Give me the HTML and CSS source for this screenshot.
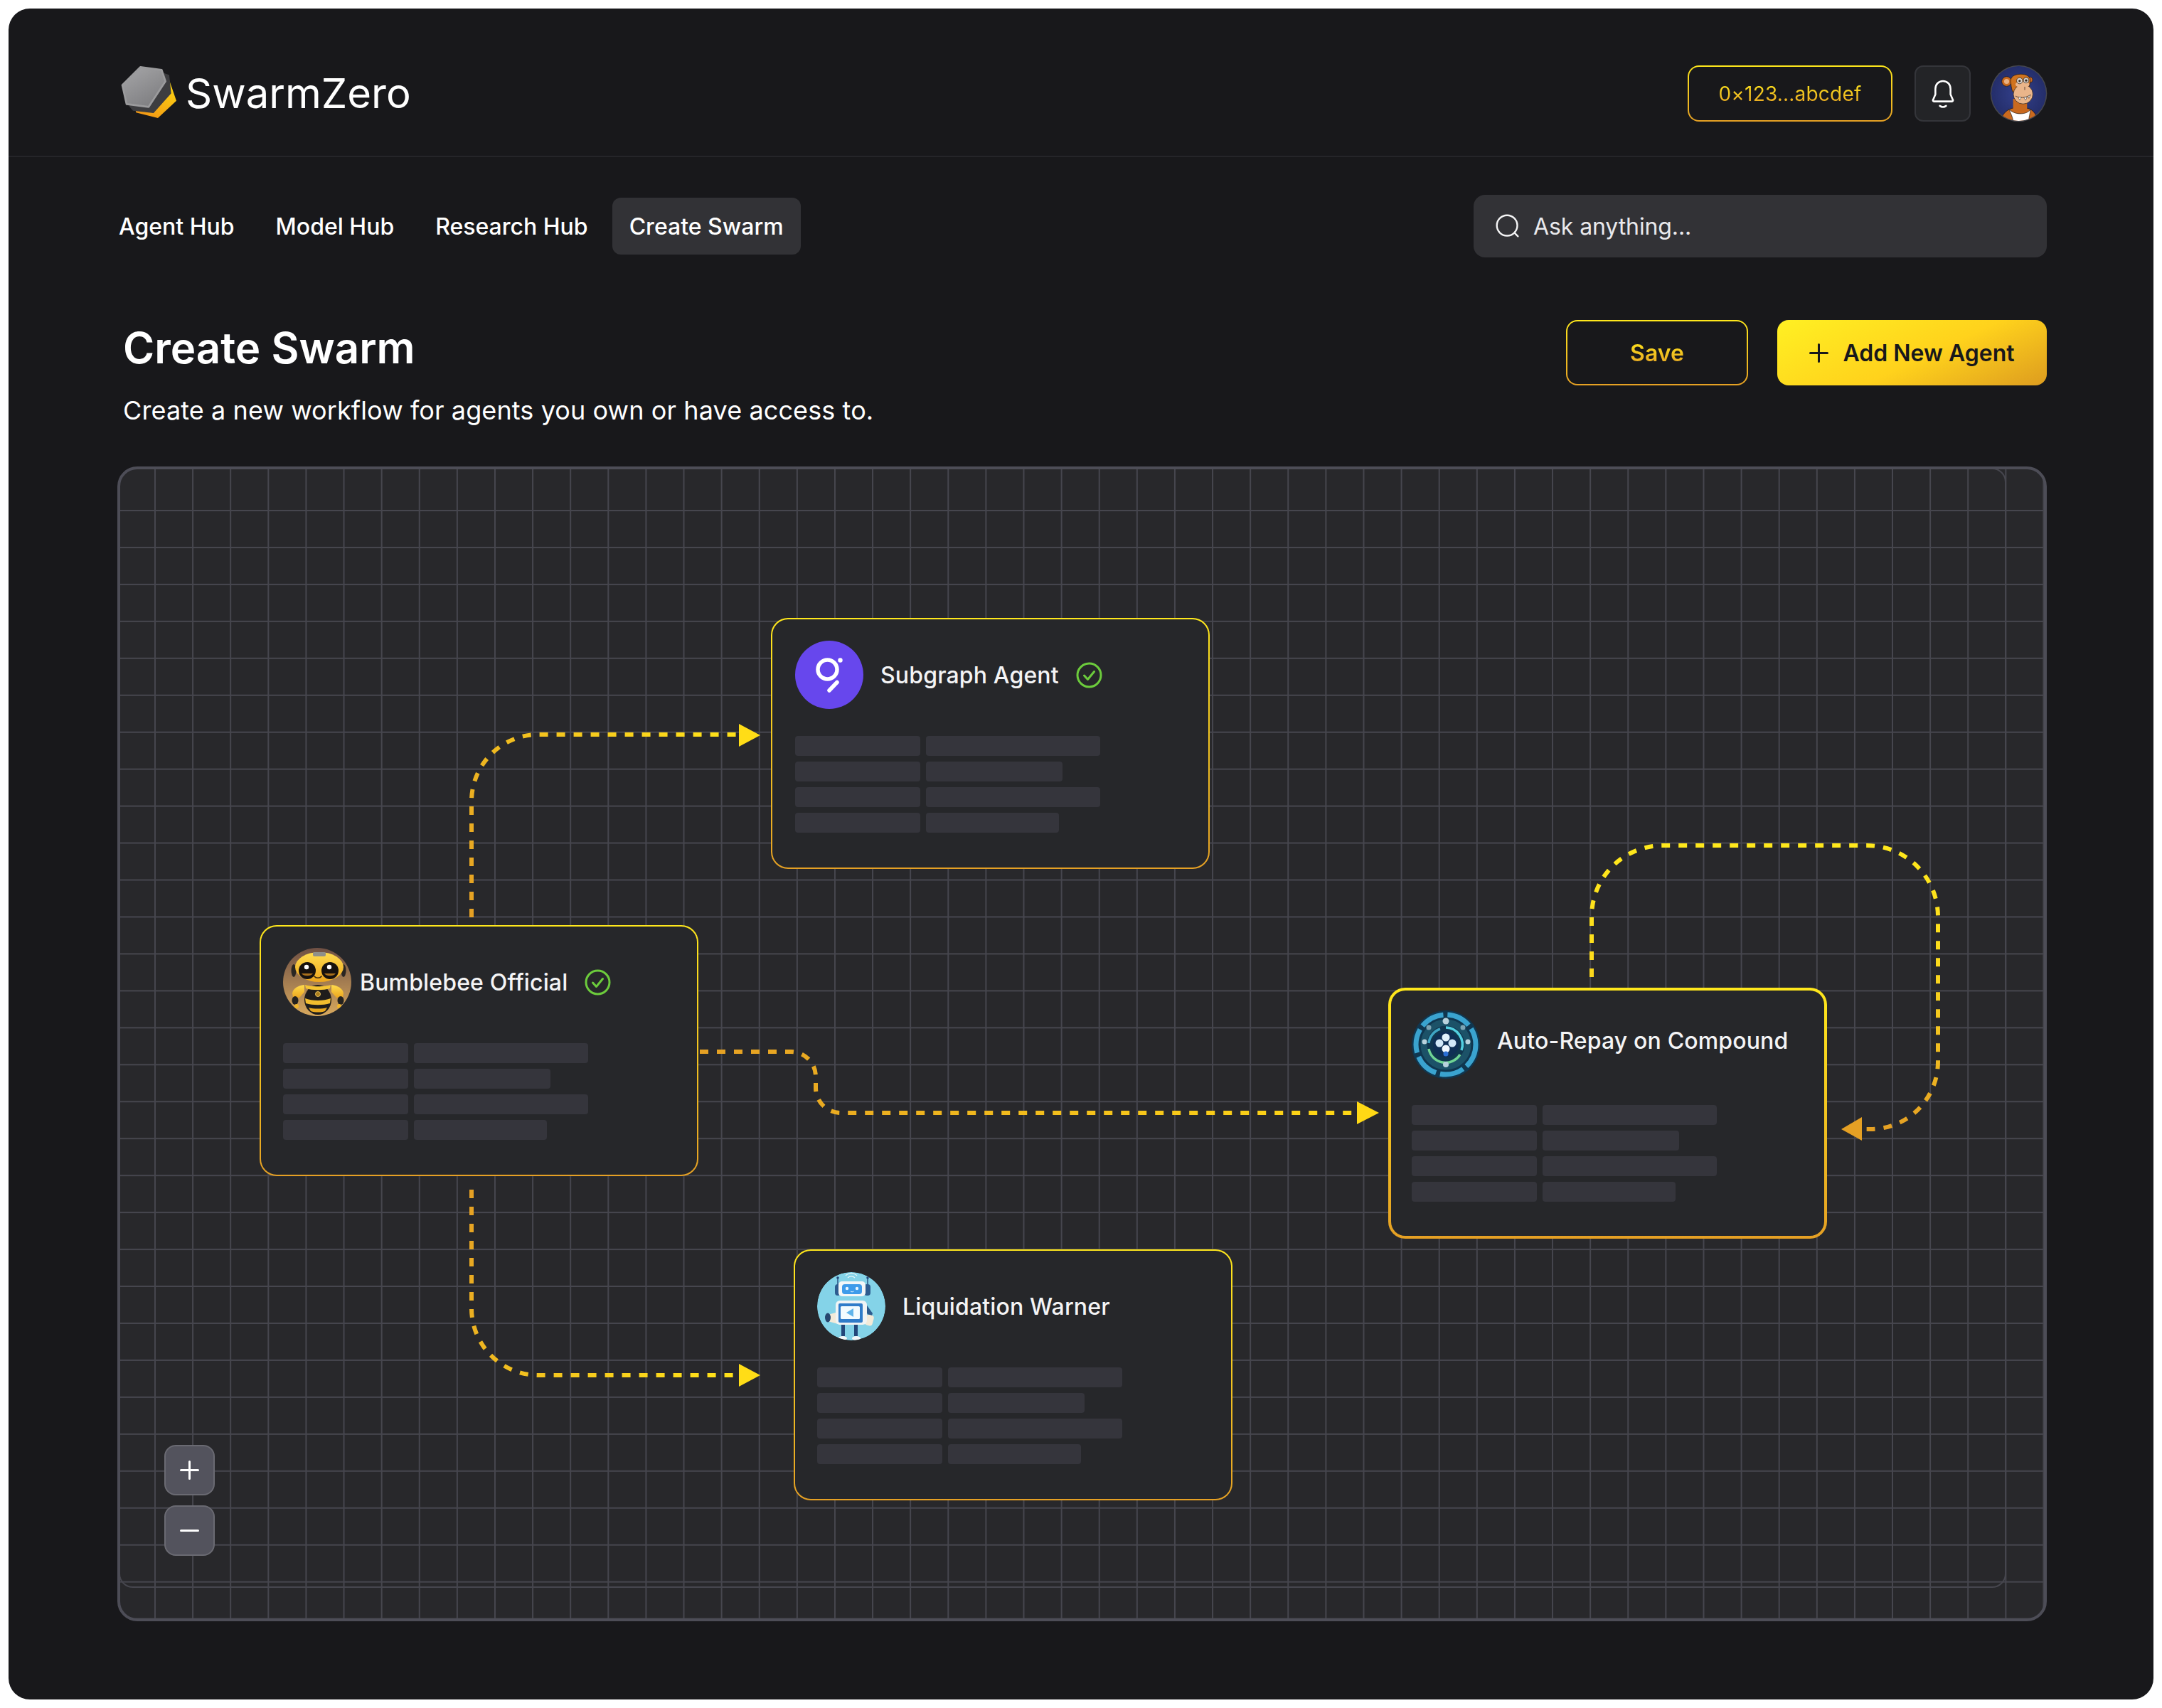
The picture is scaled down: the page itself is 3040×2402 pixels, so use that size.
FILE: index.html
```html
<!DOCTYPE html>
<html lang="en">
<head>
    <meta charset="UTF-8">
    <meta name="viewport" content="width=device-width, initial-scale=1.0">
    <title>SwarmZero - Create Swarm</title>
    <link rel="stylesheet" href="styles.css">
</head>
<body>
    <div class="panel">
        <header class="top-bar">
            <div class="logo">
                <svg class="logo-mark" viewBox="50 70 250 240">
                    <defs>
                        <linearGradient id="logoGold" x1="0.9" y1="0.1" x2="0.4" y2="1">
                            <stop offset="0" stop-color="#ffdf12"/>
                            <stop offset="1" stop-color="#f39a14"/>
                        </linearGradient>
                        <linearGradient id="logoGrey" x1="0.2" y1="0" x2="0.8" y2="1">
                            <stop offset="0" stop-color="#a3a3a5"/>
                            <stop offset="1" stop-color="#7c7c7f"/>
                        </linearGradient>
                    </defs>
                    <polygon points="200,100 262,135 292,222 214,295 122,272 110,220" fill="url(#logoGold)" stroke-linejoin="round"/>
                    <polygon points="240,108 260,115 268,190 195,272 110,262 95,245" fill="#3d3d40" stroke="#3d3d40" stroke-width="4" stroke-linejoin="round"/>
                    <polygon points="140,80 230,92 246,140 175,248 82,236 64,156" fill="url(#logoGrey)" stroke="#9b9b9d" stroke-width="8" stroke-linejoin="round"/>
                </svg>
                <span class="logo-text">SwarmZero</span>
            </div>
            <div class="top-actions">
                <button class="wallet-btn"><span class="gold-text">0×123...abcdef</span></button>
                <button class="bell-btn">
                    <svg class="bell-icon" viewBox="0 0 24 24" fill="none" stroke="#fff" stroke-width="1.4" stroke-linecap="round" stroke-linejoin="round">
                        <path d="M12 2.2c-3.4 0-5.800 2.600-5.800 6v4.200L4.400 16.600c-.3.600.1 1.200.7 1.200h13.800c.6 0 1-.6.7-1.200l-1.800-4.200V8.200c0-3.400-2.400-6-5.800-6z"/>
                        <path d="M9.600 21.200c1.400 1 3.400 1 4.800 0"/>
                    </svg>
                </button>
                <svg class="user-avatar" viewBox="50 33 248 248">
                    <defs>
                        <radialGradient id="apeBg" cx="0.5" cy="0.5" r="0.6">
                            <stop offset="0" stop-color="#33408c"/>
                            <stop offset="1" stop-color="#212a63"/>
                        </radialGradient>
                        <clipPath id="apeClip"><circle cx="174" cy="157" r="118"/></clipPath>
                    </defs>
                    <circle cx="174" cy="157" r="122" fill="#45464d"/>
                    <g clip-path="url(#apeClip)">
                        <circle cx="174" cy="157" r="118" fill="url(#apeBg)"/>
                        <path d="M95 285c4-40 30-62 60-66l58 2c26 6 40 30 44 64z" fill="#c9691f" stroke="#1c1410" stroke-width="2"/>
                        <path d="M132 224c10 24 16 34 20 60h64c2-26 6-40 10-58-12 12-24 18-46 18-20 0-36-8-48-20z" fill="#fff" stroke="#1c1410" stroke-width="2"/>
                        <rect x="150" y="180" width="60" height="50" fill="#c9691f"/>
                        <circle cx="122" cy="105" r="21" fill="#c9691f" stroke="#1c1410" stroke-width="2"/>
                        <circle cx="122" cy="105" r="11" fill="#e8b083"/>
                        <circle cx="222" cy="98" r="12" fill="#c9691f" stroke="#1c1410" stroke-width="2"/>
                        <path d="M140 100c0-20 26-28 50-26 24 1 36 14 34 32-2 14-6 20-6 30l-70 14c-6-16-8-34-8-50z" fill="#d0731f" stroke="#1c1410" stroke-width="2"/>
                        <ellipse cx="193" cy="160" rx="42" ry="42" fill="#eab58a" stroke="#1c1410" stroke-width="2"/>
                        <ellipse cx="190" cy="118" rx="30" ry="14" fill="#eab58a"/>
                        <circle cx="178" cy="102" r="13" fill="#d9d2cb" stroke="#1c1410" stroke-width="2"/>
                        <circle cx="206" cy="100" r="12" fill="#d9d2cb" stroke="#1c1410" stroke-width="2"/>
                        <circle cx="178" cy="103" r="5" fill="#3a2c22"/>
                        <circle cx="206" cy="101" r="5" fill="#3a2c22"/>
                        <path d="M200 128v14M160 168c18 10 48 8 66-6" fill="none" stroke="#1c1410" stroke-width="2"/>
                        <path d="M172 172l6 14 8-12zM196 174l8 12 6-14zM214 168l4 10 6-14z" fill="#fff" stroke="#1c1410" stroke-width="1.5"/>
                    </g>
                </svg>
            </div>
        </header>

        <main class="content">
            <div class="nav-row">
                <nav class="nav-links">
                    <a class="nav-link">Agent Hub</a>
                    <a class="nav-link">Model Hub</a>
                    <a class="nav-link">Research Hub</a>
                    <a class="nav-link active">Create Swarm</a>
                </nav>
                <div class="search-box">
                    <svg class="search-icon" viewBox="0 0 24 24" fill="none" stroke="#f4f4f5" stroke-width="1.6" stroke-linecap="round">
                        <circle cx="11.4" cy="11.4" r="9.6"/>
                        <path d="M18.6 18.6l3 3"/>
                    </svg>
                    <span>Ask anything...</span>
                </div>
            </div>

            <div class="title-row">
                <div class="title-block">
                    <h1>Create Swarm</h1>
                    <p>Create a new workflow for agents you own or have access to.</p>
                </div>
                <div class="title-actions">
                    <button class="save-btn"><span class="gold-text">Save</span></button>
                    <button class="add-btn">
                        <svg class="plus-icon" viewBox="0 0 27 27" stroke="#18181b" stroke-width="3" stroke-linecap="round">
                            <path d="M13.5 1.5v24M1.5 13.5h24"/>
                        </svg>
                        Add New Agent
                    </button>
                </div>
            </div>

            <section class="canvas">
                <div class="grid-lines"></div>
                <div class="inner-frame"></div>

                <!-- connectors use page coordinates through the viewBox -->
                <svg class="connectors" viewBox="169 660 2705 1616" fill="none">
                    <defs>
                        <linearGradient id="lineUp" gradientUnits="userSpaceOnUse" x1="663" y1="1290" x2="1000" y2="1033">
                            <stop offset="0" stop-color="#e5a024"/>
                            <stop offset="1" stop-color="#ffe01a"/>
                        </linearGradient>
                        <linearGradient id="lineAcross" gradientUnits="userSpaceOnUse" x1="984" y1="1479" x2="1930" y2="1565">
                            <stop offset="0" stop-color="#e5a024"/>
                            <stop offset="1" stop-color="#ffd915"/>
                        </linearGradient>
                        <linearGradient id="lineDown" gradientUnits="userSpaceOnUse" x1="663" y1="1673" x2="1000" y2="1934">
                            <stop offset="0" stop-color="#e5a024"/>
                            <stop offset="1" stop-color="#ffe01a"/>
                        </linearGradient>
                        <linearGradient id="lineLoop" gradientUnits="userSpaceOnUse" x1="2400" y1="1189" x2="2400" y2="1590">
                            <stop offset="0" stop-color="#ffe81c"/>
                            <stop offset="0.4" stop-color="#fddc1c"/>
                            <stop offset="1" stop-color="#e5a024"/>
                        </linearGradient>
                    </defs>
                    <g stroke-width="6" stroke-dasharray="12 12">
                        <path d="M663 1290V1127a94 94 0 0 1 94-94H1044" stroke="url(#lineUp)"/>
                        <path d="M984 1479H1112a35 35 0 0 1 35 35V1530a35 35 0 0 0 35 35H1912" stroke="url(#lineAcross)"/>
                        <path d="M663 1673V1840a94 94 0 0 0 94 94H1044" stroke="url(#lineDown)"/>
                        <path d="M2238 1374V1289a100 100 0 0 1 100-100H2625a100 100 0 0 1 100 100V1493a95 95 0 0 1-95 95H2612" stroke="url(#lineLoop)"/>
                    </g>
                    <polygon points="1039,1018 1069,1034 1039,1050" fill="#ffdd17"/>
                    <polygon points="1908,1549 1939,1565 1908,1581" fill="#ffd915"/>
                    <polygon points="1039,1918 1069,1934 1039,1950" fill="#ffdd17"/>
                    <polygon points="2589,1588 2618,1571 2618,1604" fill="#e5a024"/>
                </svg>

                <div class="node node-subgraph">
                    <div class="node-head">
                        <svg class="node-avatar" viewBox="0 0 96 96">
                            <circle cx="48" cy="48" r="48" fill="#6747ed"/>
                            <circle cx="45.5" cy="40.5" r="13.5" fill="none" stroke="#fff" stroke-width="5.5"/>
                            <circle cx="63.5" cy="27.5" r="3.2" fill="#fff"/>
                            <path d="M59 58.5L48 70" stroke="#fff" stroke-width="5.5" stroke-linecap="round"/>
                        </svg>
                        <span class="node-name">Subgraph Agent</span>
                        <svg class="check-icon" viewBox="0 0 37 37" fill="none" stroke="#6ccb3c" stroke-width="3" stroke-linecap="round" stroke-linejoin="round">
                            <circle cx="18.5" cy="18.5" r="16.5"/>
                            <path d="M11.5 19l5 5.5 9-11"/>
                        </svg>
                    </div>
                    <div class="bars">
                        <div class="bar-row"><i class="bar"></i><i class="bar long"></i></div>
                        <div class="bar-row"><i class="bar"></i><i class="bar mid"></i></div>
                        <div class="bar-row"><i class="bar"></i><i class="bar long"></i></div>
                        <div class="bar-row"><i class="bar"></i><i class="bar short"></i></div>
                    </div>
                </div>

                <div class="node node-bee">
                    <div class="node-head">
                        <svg class="node-avatar" viewBox="0 0 96 96">
                            <defs>
                                <linearGradient id="beeBg" x1="0" y1="0" x2="0" y2="1">
                                    <stop offset="0" stop-color="#6f5044"/>
                                    <stop offset="1" stop-color="#d8a95e"/>
                                </linearGradient>
                                <linearGradient id="beeYellow" x1="0" y1="0" x2="0" y2="1">
                                    <stop offset="0" stop-color="#ffdc4e"/>
                                    <stop offset="1" stop-color="#eda61e"/>
                                </linearGradient>
                                <clipPath id="beeClip"><circle cx="48" cy="48" r="48"/></clipPath>
                            </defs>
                            <g clip-path="url(#beeClip)">
                                <rect width="96" height="96" fill="url(#beeBg)"/>
                                <ellipse cx="15" cy="32" rx="3.5" ry="9" fill="#2a2622"/>
                                <ellipse cx="85" cy="32" rx="3.5" ry="9" fill="#2a2622"/>
                                <path d="M30 52c-9 1-16 5-17 12l1 5 9 1 7-8z" fill="url(#beeYellow)"/>
                                <path d="M68 52c9 1 16 5 17 12l-1 5-9 1-7-8z" fill="url(#beeYellow)"/>
                                <ellipse cx="17" cy="74" rx="4.500" ry="6" fill="#24221f"/>
                                <ellipse cx="81" cy="74" rx="4.500" ry="6" fill="#24221f"/>
                                <circle cx="19" cy="82" r="3" fill="#f0b52a"/>
                                <circle cx="79" cy="82" r="3" fill="#f0b52a"/>
                                <ellipse cx="49" cy="73" rx="19" ry="21" fill="#1f1d1b"/>
                                <path d="M31 71c10 4 26 4 36 0l-1 7c-10 3-24 3-34 0z" fill="#f2bd2e"/>
                                <path d="M36 84c7 2 19 2 26 0l-3 5c-6 2-14 2-20 0z" fill="#e8a820"/>
                                <path d="M31 52c8 3 28 3 36 0l-1 5c-9 3-25 3-34 0z" fill="#f5c534"/>
                                <circle cx="49" cy="65" r="3.500" fill="#a97d1c" stroke="#e7c15b" stroke-width="1"/>
                                <ellipse cx="51" cy="27" rx="34" ry="21" fill="url(#beeYellow)"/>
                                <rect x="42" y="6" width="18" height="6" rx="2" fill="#8f8f8a"/>
                                <circle cx="34" cy="32" r="12" fill="#17120e"/>
                                <circle cx="66" cy="32" r="12" fill="#17120e"/>
                                <path d="M26 36a9 6 0 0 0 16 0z" fill="#a9701c"/>
                                <path d="M58 36a9 6 0 0 0 16 0z" fill="#a9701c"/>
                                <circle cx="33" cy="27" r="3.2" fill="#fff"/>
                                <circle cx="65" cy="27" r="3.2" fill="#fff"/>
                                <path d="M44 40c2 3 8 3 10 0" fill="none" stroke="#3a2a10" stroke-width="1.6" stroke-linecap="round"/>
                            </g>
                        </svg>
                        <span class="node-name">Bumblebee Official</span>
                        <svg class="check-icon" viewBox="0 0 37 37" fill="none" stroke="#6ccb3c" stroke-width="3" stroke-linecap="round" stroke-linejoin="round">
                            <circle cx="18.5" cy="18.5" r="16.5"/>
                            <path d="M11.5 19l5 5.5 9-11"/>
                        </svg>
                    </div>
                    <div class="bars">
                        <div class="bar-row"><i class="bar"></i><i class="bar long"></i></div>
                        <div class="bar-row"><i class="bar"></i><i class="bar mid"></i></div>
                        <div class="bar-row"><i class="bar"></i><i class="bar long"></i></div>
                        <div class="bar-row"><i class="bar"></i><i class="bar short"></i></div>
                    </div>
                </div>

                <div class="node node-repay">
                    <div class="node-head">
                        <svg class="node-avatar" viewBox="0 0 96 96" fill="none">
                            <circle cx="48" cy="48" r="48" fill="#10364f"/>
                            <circle cx="48" cy="48" r="42" stroke="#3aa3cf" stroke-width="7" stroke-dasharray="34 6"/>
                            <circle cx="48" cy="48" r="31" stroke="#1c5268" stroke-width="9"/>
                            <path d="M48 24a24 24 0 0 1 22 32" stroke="#52cfe0" stroke-width="3.5"/>
                            <path d="M68 62a24 24 0 0 1-44-8" stroke="#6fd494" stroke-width="3.5"/>
                            <path d="M24 46a24 24 0 0 1 16-20" stroke="#3fa6c4" stroke-width="3.5"/>
                            <circle cx="48" cy="48" r="18" fill="#0f2f55"/>
                            <circle cx="48" cy="38" r="5.5" fill="#e2f2fb"/>
                            <circle cx="39" cy="46" r="5.5" fill="#d2e8f8"/>
                            <circle cx="57" cy="46" r="5.5" fill="#d2e8f8"/>
                            <circle cx="48" cy="54" r="5.5" fill="#f0f8ff"/>
                            <circle cx="48" cy="61" r="3.5" fill="#2a6fd6"/>
                            <circle cx="48" cy="15" r="4.5" fill="#b8d2dc"/>
                            <circle cx="48" cy="76" r="4" fill="#b8d2dc"/>
                            <circle cx="18" cy="44" r="3.5" fill="#b8d2dc"/>
                            <circle cx="79" cy="44" r="3.5" fill="#b8d2dc"/>
                            <circle cx="24" cy="24" r="3.5" fill="#7da4b4"/>
                            <circle cx="72" cy="24" r="3.5" fill="#7da4b4"/>
                        </svg>
                        <span class="node-name">Auto-Repay on Compound</span>
                    </div>
                    <div class="bars">
                        <div class="bar-row"><i class="bar"></i><i class="bar long"></i></div>
                        <div class="bar-row"><i class="bar"></i><i class="bar mid"></i></div>
                        <div class="bar-row"><i class="bar"></i><i class="bar long"></i></div>
                        <div class="bar-row"><i class="bar"></i><i class="bar short"></i></div>
                    </div>
                </div>

                <div class="node node-warner">
                    <div class="node-head">
                        <svg class="node-avatar" viewBox="0 0 96 96">
                            <defs>
                                <clipPath id="robotClip"><circle cx="48" cy="48" r="48"/></clipPath>
                            </defs>
                            <g clip-path="url(#robotClip)">
                                <circle cx="48" cy="48" r="48" fill="#84d3e8"/>
                                <path d="M40 5a11 11 0 0 1 16 0M43 8a7 7 0 0 1 10 0" fill="none" stroke="#e2f6fa" stroke-width="1.3"/>
                                <path d="M29 8v12M71 8v12" stroke="#23477a" stroke-width="1.4"/>
                                <circle cx="29" cy="8" r="1.8" fill="#23477a"/>
                                <circle cx="71" cy="8" r="1.8" fill="#23477a"/>
                                <rect x="25" y="17" width="8" height="16" rx="4" fill="#2d5c8f"/>
                                <rect x="66" y="17" width="9" height="16" rx="4" fill="#2d5c8f"/>
                                <rect x="30" y="13" width="38" height="21" rx="5" fill="#f3f7f8"/>
                                <rect x="35" y="17" width="28" height="14" rx="4" fill="#3e9bea"/>
                                <circle cx="42" cy="23" r="2.2" fill="#eaf7ff"/>
                                <circle cx="56" cy="23" r="2.2" fill="#eaf7ff"/>
                                <path d="M47 27c1.500 1 3 1 4.500 0" fill="none" stroke="#eaf7ff" stroke-width="1"/>
                                <path d="M33 55l-18 5v9l18 5z" fill="#f3ead8"/>
                                <ellipse cx="15" cy="64" rx="4" ry="6.500" fill="#27466f"/>
                                <path d="M68 44l10 14-2 6-10-10z" fill="#2d5c8f"/>
                                <rect x="68" y="60" width="11" height="15" rx="4" fill="#f3ead8" transform="rotate(15 73 67)"/>
                                <rect x="34" y="72" width="5" height="18" fill="#23477a"/>
                                <rect x="52" y="72" width="5" height="18" fill="#23477a"/>
                                <ellipse cx="36" cy="93" rx="6" ry="3" fill="#f3f7f8"/>
                                <ellipse cx="55" cy="93" rx="6" ry="3" fill="#f3f7f8"/>
                                <rect x="26" y="40" width="44" height="34" rx="6" fill="#f0f4f5"/>
                                <rect x="30" y="44" width="34" height="27" rx="2" fill="#2f7cc9"/>
                                <rect x="33" y="48" width="27" height="18" rx="1.500" fill="#f2fbfe"/>
                                <path d="M41 57l10-6v12z" fill="#5fb4ea"/>
                            </g>
                        </svg>
                        <span class="node-name">Liquidation Warner</span>
                    </div>
                    <div class="bars">
                        <div class="bar-row"><i class="bar"></i><i class="bar long"></i></div>
                        <div class="bar-row"><i class="bar"></i><i class="bar mid"></i></div>
                        <div class="bar-row"><i class="bar"></i><i class="bar long"></i></div>
                        <div class="bar-row"><i class="bar"></i><i class="bar short"></i></div>
                    </div>
                </div>

                <div class="zoom-controls">
                    <button class="zoom-btn">
                        <svg viewBox="0 0 27 27" stroke="#fff" stroke-width="3" stroke-linecap="round"><path d="M13.5 1.5v24M1.5 13.5h24"/></svg>
                    </button>
                    <button class="zoom-btn">
                        <svg viewBox="0 0 27 27" stroke="#fff" stroke-width="3" stroke-linecap="round"><path d="M1.5 13.5h24"/></svg>
                    </button>
                </div>
            </section>
        </main>
    </div>
</body>
</html>
```

FILE: styles.css
```css
* {
    margin: 0;
    padding: 0;
    box-sizing: border-box;
}

body {
    background-color: #fff;
    font-family: "Inter", "Liberation Sans", sans-serif;
    color: #fff;
}

button {
    font-family: inherit;
    cursor: pointer;
}

.panel {
    width: 3016px;
    height: 2378px;
    margin: 12px;
    background-color: #18181b;
    border-radius: 30px;
    overflow: hidden;
}

/* Top bar */
.top-bar {
    height: 209px;
    padding: 79px 149px 0 155px;
    display: flex;
    justify-content: space-between;
    align-items: flex-start;
    border-bottom: 2px solid #252529;
}

.logo {
    display: flex;
    align-items: center;
    gap: 10px;
}

.logo-mark {
    width: 84px;
    height: 80px;
}

.logo-text {
    font-size: 58px;
    font-weight: 400;
}

.top-actions {
    display: flex;
    align-items: center;
    gap: 27px;
}

.gold-text {
    background: linear-gradient(180deg, #ffe81c, #e5a024);
    -webkit-background-clip: text;
    background-clip: text;
    color: transparent;
}

.wallet-btn {
    width: 288px;
    height: 79px;
    margin-right: 4px;
    border: 2px solid transparent;
    border-radius: 16px;
    background: linear-gradient(#18181b, #18181b) padding-box, linear-gradient(180deg, #ffe81c, #e5a024) border-box;
    font-size: 28px;
    font-weight: 400;
    letter-spacing: 0.2px;
}

.bell-btn {
    width: 79px;
    height: 79px;
    border: 2px solid #34353a;
    border-radius: 12px;
    background-color: #232427;
    display: flex;
    align-items: center;
    justify-content: center;
}

.bell-icon {
    width: 44px;
    height: 44px;
}

.user-avatar {
    width: 81px;
    height: 81px;
}

/* Nav and search */
.content {
    padding: 53px 150px 0 153px;
}

.nav-row {
    display: flex;
    justify-content: space-between;
    align-items: center;
    height: 88px;
}

.nav-links {
    display: flex;
    gap: 10px;
    margin-left: -22px;
}

.nav-link {
    height: 80px;
    padding: 0 24px;
    display: flex;
    align-items: center;
    border-radius: 12px;
    font-size: 32px;
    font-weight: 500;
}

.nav-link.active {
    background-color: #323236;
}

.search-box {
    width: 806px;
    height: 88px;
    padding-left: 30px;
    display: flex;
    align-items: center;
    gap: 18px;
    background-color: #323236;
    border-radius: 16px;
    font-size: 32px;
    letter-spacing: -0.1px;
    color: #e9e9ec;
}

.search-icon {
    width: 36px;
    height: 36px;
}

/* Title row */
.title-row {
    display: flex;
    justify-content: space-between;
    align-items: flex-start;
    padding-top: 88px;
    height: 294px;
}

.title-block {
    padding-left: 8px;
    padding-top: 4px;
}

.title-block h1 {
    font-size: 60px;
    font-weight: 600;
    line-height: 70px;
}

.title-block p {
    margin-top: 31px;
    font-size: 36px;
    font-weight: 400;
    line-height: 44px;
    letter-spacing: 0.1px;
}

.title-actions {
    display: flex;
    gap: 41px;
}

.save-btn {
    width: 256px;
    height: 92px;
    border: 2px solid transparent;
    border-radius: 16px;
    background: linear-gradient(#18181b, #18181b) padding-box, linear-gradient(180deg, #ffe81c, #e5a024) border-box;
    font-size: 32px;
    font-weight: 600;
}

.add-btn {
    width: 379px;
    height: 92px;
    display: flex;
    align-items: center;
    justify-content: center;
    gap: 20px;
    border: none;
    border-radius: 16px;
    background: linear-gradient(155deg, #fff023 0%, #ffd21c 55%, #dd9c1f 100%);
    color: #18181b;
    font-size: 32px;
    font-weight: 600;
}

.plus-icon {
    width: 27px;
    height: 27px;
}

/* Canvas */
.canvas {
    position: relative;
    width: 2713px;
    height: 1624px;
    border: 4px solid #4d4d57;
    border-radius: 28px;
    background-color: #28282b;
    background-image: linear-gradient(90deg, #46464e 2px, transparent 2px);
    background-size: 53.12px 100%;
    background-position: 48px 0;
    overflow: hidden;
}

.grid-lines {
    position: absolute;
    inset: 57px 0 0 0;
    background-image: linear-gradient(180deg, #46464e 2px, transparent 2px);
    background-size: 100% 51.96px;
}

.inner-frame {
    position: absolute;
    left: -2px;
    top: -2px;
    width: 2654px;
    height: 1575px;
    border: 2px solid #46464e;
    border-radius: 20px;
}

.connectors {
    position: absolute;
    inset: 0;
    width: 2705px;
    height: 1616px;
}

/* Nodes */
.node {
    position: absolute;
    width: 617px;
    height: 353px;
    padding: 30px 30px 30px 31px;
    border: 2px solid transparent;
    border-radius: 24px;
    background: linear-gradient(#26272a, #26272a) padding-box, linear-gradient(180deg, #ffe81c, #e5a024) border-box;
}

.node-subgraph {
    left: 915px;
    top: 209px;
    padding-left: 32px;
}

.node-bee {
    left: 196px;
    top: 641px;
}

.node-repay {
    left: 1783px;
    top: 729px;
    padding: 28px 28px 28px 29px;
    border-width: 4px;
}

.node-repay .node-name {
    margin-bottom: 12px;
}

.node-repay .bars {
    margin-top: 37px;
}

.node-warner {
    left: 947px;
    top: 1097px;
}

.node-head {
    display: flex;
    align-items: center;
    gap: 24px;
    height: 96px;
}

.node-bee .node-head {
    gap: 12px;
}

.node-bee .check-icon {
    margin-left: 12px;
}

.node-avatar {
    width: 96px;
    height: 96px;
    flex: none;
}

.node-name {
    font-size: 32px;
    font-weight: 500;
    letter-spacing: 0.15px;
    color: #f4f4f5;
}

.check-icon {
    width: 37px;
    height: 37px;
    flex: none;
}

.bars {
    margin-top: 38px;
    display: flex;
    flex-direction: column;
    gap: 8px;
}

.bar-row {
    display: flex;
    gap: 8px;
}

.bar {
    display: block;
    width: 176px;
    height: 28px;
    border-radius: 4px;
    background-color: #35353c;
}

.bar.long {
    width: 245px;
}

.bar.mid {
    width: 192px;
}

.bar.short {
    width: 187px;
}

/* Zoom controls */
.zoom-controls {
    position: absolute;
    left: 62px;
    top: 1372px;
    display: flex;
    flex-direction: column;
    gap: 14px;
}

.zoom-btn {
    width: 71px;
    height: 71px;
    display: flex;
    align-items: center;
    justify-content: center;
    background-color: #53535d;
    border: 2px solid #6a6a72;
    border-radius: 16px;
}

.zoom-btn svg {
    width: 27px;
    height: 27px;
}
```
